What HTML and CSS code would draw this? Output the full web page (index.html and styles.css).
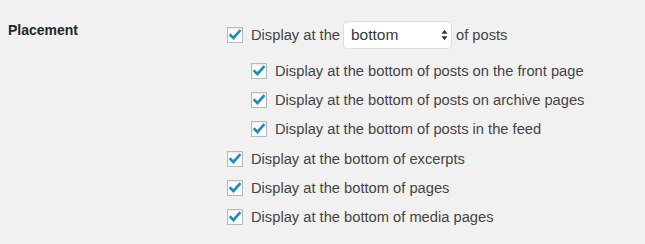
FILE: index.html
```html
<!DOCTYPE html>
<html>
<head>
    <title>Placement</title>
    <link rel="stylesheet" href="styles.css">
</head>
<body>
    <div class="form-row">
        <div class="row-label">Placement</div>
        <div class="row-field">
            <div class="option option-main">
                <span class="check"><svg viewBox="0 0 16 16"><path d="M3.6 8.2 L6.4 11 L12.6 4.2" /></svg></span>
                <span class="text">Display at the</span>
                <span class="select">bottom<svg class="arrows" viewBox="0 0 8 14"><path d="M4 1 L7.5 5.5 L0.5 5.5 Z M4 13 L7.5 8.5 L0.5 8.5 Z" /></svg></span>
                <span class="text">of posts</span>
            </div>
            <div class="sub-options">
                <div class="option">
                    <span class="check"><svg viewBox="0 0 16 16"><path d="M3.6 8.2 L6.4 11 L12.6 4.2" /></svg></span>
                    <span class="text">Display at the bottom of posts on the front page</span>
                </div>
                <div class="option">
                    <span class="check"><svg viewBox="0 0 16 16"><path d="M3.6 8.2 L6.4 11 L12.6 4.2" /></svg></span>
                    <span class="text">Display at the bottom of posts on archive pages</span>
                </div>
                <div class="option">
                    <span class="check"><svg viewBox="0 0 16 16"><path d="M3.6 8.2 L6.4 11 L12.6 4.2" /></svg></span>
                    <span class="text">Display at the bottom of posts in the feed</span>
                </div>
            </div>
            <div class="option">
                <span class="check"><svg viewBox="0 0 16 16"><path d="M3.6 8.2 L6.4 11 L12.6 4.2" /></svg></span>
                <span class="text">Display at the bottom of excerpts</span>
            </div>
            <div class="option">
                <span class="check"><svg viewBox="0 0 16 16"><path d="M3.6 8.2 L6.4 11 L12.6 4.2" /></svg></span>
                <span class="text">Display at the bottom of pages</span>
            </div>
            <div class="option">
                <span class="check"><svg viewBox="0 0 16 16"><path d="M3.6 8.2 L6.4 11 L12.6 4.2" /></svg></span>
                <span class="text">Display at the bottom of media pages</span>
            </div>
        </div>
    </div>
</body>
</html>
```

FILE: styles.css
```css
*, *:before, *:after {
    box-sizing: border-box;
}
html, body {
    margin: 0;
    background: #f1f1f1;
    font-family: "Liberation Sans", Arial, sans-serif;
    font-size: 14px;
    color: #444;
}
.form-row {
    display: flex;
    padding: 21px 0 0 8px;
}
.row-label {
    width: 219px;
    padding-top: 1px;
    line-height: 17px;
    font-weight: bold;
    color: #23282d;
}
.row-field {
    display: flex;
    flex-direction: column;
    font-size: 14.7px;
}
.option {
    display: flex;
    align-items: center;
    height: 29px;
}
.option-main {
    height: 28px;
    margin-bottom: 7px;
}
.sub-options {
    padding-left: 24px;
    margin-bottom: 1px;
}
.check {
    width: 16px;
    height: 16px;
    margin-right: 8px;
    border: 1px solid #b4b9be;
    background: #fff;
    box-shadow: inset 0 1px 2px rgba(0, 0, 0, 0.1);
    display: flex;
    align-items: center;
    justify-content: center;
}
.check svg {
    width: 16px;
    height: 16px;
    flex: none;
}
.check path {
    fill: none;
    stroke: #1e8cbe;
    stroke-width: 2.6;
    stroke-linecap: square;
}
.select {
    display: flex;
    align-items: center;
    justify-content: space-between;
    width: 109px;
    height: 28px;
    margin: 0 4px 0 3px;
    padding: 0 3px 0 7px;
    background: #fff;
    border: 1px solid #ddd;
    border-radius: 4px;
    box-shadow: inset 0 1px 2px rgba(0, 0, 0, 0.04);
    color: #32373c;
    font-size: 15.5px;
}
.arrows {
    width: 7px;
    height: 12px;
}
.arrows path {
    fill: #333;
}
```
